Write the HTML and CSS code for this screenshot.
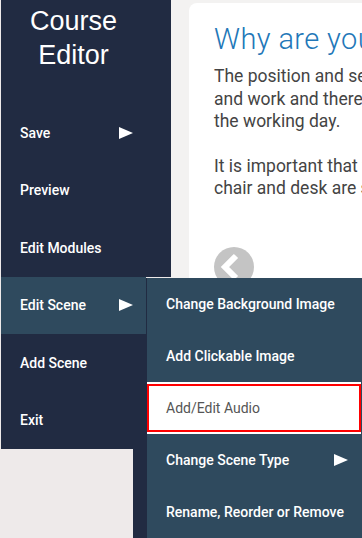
FILE: index.html
```html
<!DOCTYPE html>
<html lang="en">
<head>
    <meta charset="UTF-8">
    <meta name="viewport" content="width=device-width, initial-scale=1.0">
    <title>Course Editor</title>
    <link rel="stylesheet" href="styles.css">
</head>
<body>
    <div class="sidebar">
        <div class="brand">Course<br>Editor</div>
        <div class="menu-item">
            <span class="label">Save</span>
            <svg class="arrow" width="14" height="12" viewBox="0 0 14 12"><polygon points="0,0 14,6 0,12" fill="#fff"/></svg>
        </div>
        <div class="menu-item"><span class="label">Preview</span></div>
        <div class="menu-item"><span class="label">Edit Modules</span></div>
        <div class="menu-lower">
            <div class="menu-item open">
                <span class="label">Edit Scene</span>
                <svg class="arrow" width="14" height="12" viewBox="0 0 14 12"><polygon points="0,0 14,6 0,12" fill="#fff"/></svg>
            </div>
            <div class="menu-item"><span class="label">Add Scene</span></div>
            <div class="menu-item"><span class="label">Exit</span></div>
        </div>
    </div>

    <div class="main">
        <div class="card">
            <h1>Why are you sitting comfortably?</h1>
            <p>The position and setting of your workstation affects the way you sit<br>and work and therefore your comfort throughout<br>the working day.</p>
            <p>It is important that your<br>chair and desk are set up correctly.</p>
            <div class="nav-prev">
                <svg width="40" height="40" viewBox="0 0 40 40">
                    <circle cx="20" cy="20" r="20" fill="#c4c4c4"/>
                    <polyline points="22,9 11,20 22,31" fill="none" stroke="#fff" stroke-width="6"/>
                </svg>
            </div>
        </div>
    </div>

    <div class="submenu">
        <div class="sub-list">
            <div class="sub-item">Change Background Image</div>
            <div class="sub-item">Add Clickable Image</div>
            <div class="sub-item active">Add/Edit Audio</div>
            <div class="sub-item">
                Change Scene Type
                <svg class="sub-arrow" width="14" height="12" viewBox="0 0 14 12"><polygon points="0,0 14,6 0,12" fill="#fff"/></svg>
            </div>
            <div class="sub-item">Rename, Reorder or Remove</div>
        </div>
    </div>
</body>
</html>
```

FILE: styles.css
```css
html, body {
    height: 100%;
}
body {
    margin: 0;
    display: flex;
    overflow: hidden;
    background-color: #eeeaea;
    font-family: Roboto, "Liberation Sans", sans-serif;
}
.sidebar {
    width: 170px;
    margin-left: 1px;
    flex-shrink: 0;
    display: flex;
    flex-direction: column;
}
.brand {
    height: 104px;
    box-sizing: border-box;
    padding: 4px 25px 0 0;
    background-color: #212b42;
    color: white;
    font-family: "Liberation Sans", Arial, sans-serif;
    font-size: 27px;
    line-height: 34px;
    text-align: center;
}
.menu-item {
    height: 57.5px;
    display: flex;
    align-items: center;
    padding-left: 19px;
    background-color: #212b42;
    color: white;
    font-size: 14px;
    font-weight: 500;
}
.menu-item .label {
    width: 99px;
}
.menu-lower {
    width: 145px;
    position: relative;
    z-index: 2;
}
.menu-item.open {
    background-color: #2f4a5e;
}
.main {
    flex: 1;
    background-color: #f3f2f1;
    padding: 3px 0 0 18px;
    overflow: hidden;
}
.card {
    width: 600px;
    height: 100%;
    background-color: white;
    border-radius: 8px;
    padding: 20px 0 0 25px;
}
.card h1 {
    margin: 0 0 9px;
    font-size: 29px;
    font-weight: 300;
    letter-spacing: 0.4px;
    line-height: 33px;
    color: #2277b8;
    white-space: nowrap;
}
.card p {
    margin: 0 0 22px;
    font-size: 17.5px;
    line-height: 22.5px;
    color: #444;
    white-space: nowrap;
}
.nav-prev {
    margin-top: 47px;
    width: 40px;
    height: 40px;
}
.submenu {
    position: absolute;
    left: 133px;
    top: 278px;
    right: 0;
    bottom: 0;
    padding-left: 14px;
    background-color: #212b42;
    z-index: 1;
}
.sub-list {
    height: 100%;
    background-color: #2f4a5e;
}
.sub-item {
    height: 52px;
    box-sizing: border-box;
    display: flex;
    align-items: center;
    padding: 0 14px 0 19px;
    color: white;
    font-size: 14px;
    font-weight: 500;
}
.sub-item.active {
    background-color: white;
    border: 2px solid #f00;
    padding-left: 17px;
    color: #555;
    font-weight: 400;
    box-shadow: 0 -2px 0 white, 0 2px 0 white;
    height: 48px;
    margin: 2px 1px 2px 0;
}
.sub-arrow {
    margin-left: auto;
}
```
